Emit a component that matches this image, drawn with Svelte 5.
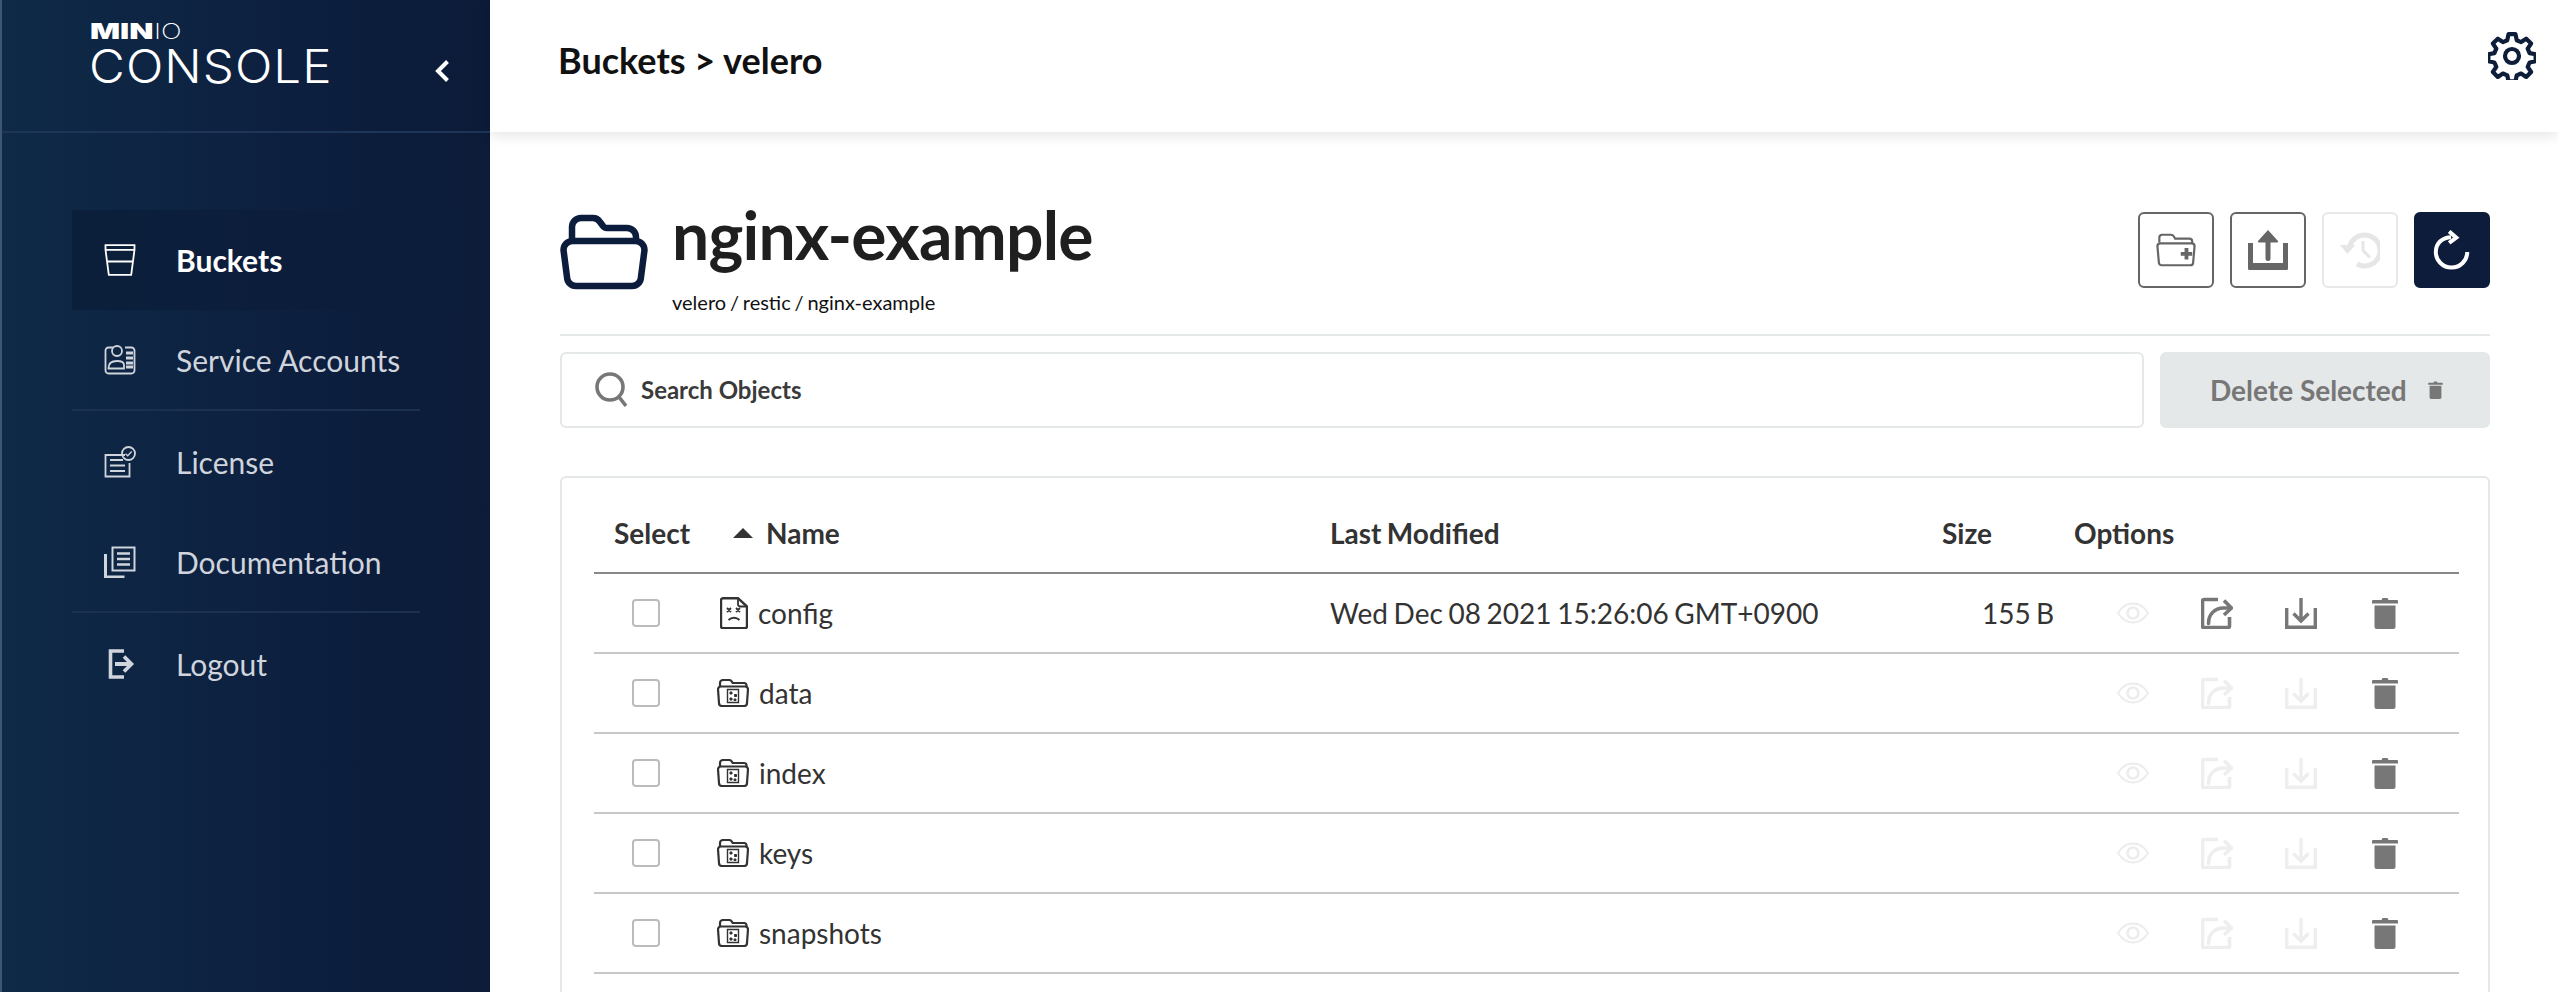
<script lang="ts">
  const navItems = [
    { label: "Buckets", icon: "bucket", active: true },
    { label: "Service Accounts", icon: "account", divider: true },
    { label: "License", icon: "license" },
    { label: "Documentation", icon: "docs", divider: true },
    { label: "Logout", icon: "logout" },
  ];

  const rows = [
    { name: "config", kind: "file", modified: "Wed Dec 08 2021 15:26:06 GMT+0900", size: "155 B" },
    { name: "data", kind: "folder", modified: "", size: "" },
    { name: "index", kind: "folder", modified: "", size: "" },
    { name: "keys", kind: "folder", modified: "", size: "" },
    { name: "snapshots", kind: "folder", modified: "", size: "" },
  ];
</script>

{#snippet trash(cls)}
  <svg class={cls} viewBox="0 0 26 32" fill="#777">
    <path d="M1 3h8.500L10.500 1h5l1 2H25a1 1 0 0 1 1 1v2.500H0V4a1 1 0 0 1 1-1z" />
    <path d="M2.500 8.500h21v21a2.500 2.500 0 0 1-2.500 2.500H5a2.500 2.500 0 0 1-2.500-2.500z" />
  </svg>
{/snippet}

<div class="layout">
  <aside class="sidebar">
    <div class="brand">
      <div class="logo">
        <div class="minio"><b>MIN</b><span>IO</span></div>
        <div class="console">CONSOLE</div>
      </div>
      <svg class="collapse" viewBox="0 0 16 24" fill="none" stroke="#fff" stroke-width="4">
        <path d="M13.500 2.500 4 12l9.500 9.500" />
      </svg>
    </div>
    <nav>
      {#each navItems as item}
        <div class="nav-item" class:active={item.active} class:divider={item.divider}>
          <svg class="nav-icon" viewBox="0 0 32 32" fill="none" stroke="currentColor" stroke-width="1.800">
            {#if item.icon === "bucket"}
              <path d="M1.500 1.200h29v4.600l-3.300 25h-22.400l-3.300-25zM1.500 5.800h29M3.200 17.500h25.600" />
            {:else if item.icon === "account"}
              <path d="M9 3.500H4.500a3 3 0 0 0-3 3v20a3 3 0 0 0 3 3h23a3 3 0 0 0 3-3v-20a3 3 0 0 0-3-3H21" />
              <circle cx="13" cy="7" r="5" />
              <path d="M4.500 24c0-5 3.500-7 8.500-7s7 2 7 4v3.500H4.500z" />
              <path d="M22 9h7M22 14h7M22 19h7M22 23h7" stroke-width="3" />
            {:else if item.icon === "license"}
              <path d="M21 9H1.500v21.500h24V17" />
              <path d="M6 14h13M6 19.500h15M6 25h15" stroke-width="2.200" />
              <circle cx="24.500" cy="7.500" r="6.500" />
              <path d="m21.500 7.800 2.200 2 4-4.300" stroke-width="1.300" />
            {:else if item.icon === "docs"}
              <path d="M8.500 1.500h22v23h-22z" stroke-width="2" />
              <path d="M13 7.500h13M13 13h13M13 18.500h13" stroke-width="2.400" />
              <path d="M1.500 8v23h19" stroke-width="3" />
            {:else}
              <path d="M20 3H6.500v26H20" stroke-width="3.600" />
              <path d="M11 16h14" stroke-width="4" />
              <path d="m20 8.500 7.500 7.500-7.500 7.500" stroke-width="3.600" />
            {/if}
          </svg>
          <span>{item.label}</span>
        </div>
      {/each}
    </nav>
  </aside>

  <div class="main">
    <header class="topbar">
      <h1>Buckets &gt; velero</h1>
      <svg class="gear" viewBox="0 0 48 48" fill="none" stroke="#0d1d3a" stroke-width="4.200" stroke-linejoin="round">
        <path d="M20.500 2.200h7l1.200 6 4.400 1.900 5.100-3.400 4.900 4.900-3.400 5.100 1.900 4.400 6 1.200v7l-6 1.200-1.900 4.400 3.400 5.100-4.900 4.900-5.100-3.400-4.400 1.900-1.200 6h-7l-1.200-6-4.400-1.900-5.100 3.400-4.900-4.900 3.400-5.100-1.900-4.400-6-1.200v-7l6-1.200 1.900-4.400-3.400-5.100 4.900-4.900 5.100 3.400 4.400-1.900z" />
        <circle cx="24" cy="24" r="7" />
      </svg>
    </header>

    <section class="page">
      <div class="title-row">
        <svg class="big-folder" viewBox="0 0 88 76" fill="none" stroke="#0c1c3c" stroke-width="6.500" stroke-linejoin="round">
          <path d="M12 27V13a9 9 0 0 1 9-9h12c3 0 5 1 7 4l3 4c1 1.500 2 2 4 2h20a9 9 0 0 1 9 9v4" />
          <path d="M3.500 36a9 9 0 0 1 9-9h63a9 9 0 0 1 9 9L81 63a9 9 0 0 1-9 9H16a9 9 0 0 1-9-9z" />
        </svg>
        <div class="title-text">
          <h2>nginx-example</h2>
          <div class="path">velero / restic / nginx-example</div>
        </div>
        <div class="actions">
          <button class="square">
            <svg viewBox="0 0 42 36" fill="none" stroke="#666" stroke-width="2.300">
              <path d="M3.500 10V5a3 3 0 0 1 3-3h9c2 0 3 1 4 3l.5 1h15a3 3 0 0 1 3 3v2" />
              <path d="M1.500 14a3 3 0 0 1 3-3h33a3 3 0 0 1 3 3l-1.500 17a3 3 0 0 1-3 3H6a3 3 0 0 1-3-3z" />
              <path d="M26 22h12M32 16v12" stroke-width="4" />
            </svg>
          </button>
          <button class="square">
            <svg viewBox="0 0 40 40" fill="#666" stroke="none">
              <path d="M0 13h5v20h30V13h5v25.500a1.500 1.500 0 0 1-1.500 1.500h-37A1.500 1.500 0 0 1 0 38.500z" />
              <path d="M20 0 30 11c.6.800-.2 1.500-1 1.500h-6.500v16a2.500 2.500 0 0 1-5 0v-16H11c-.8 0-1.600-.7-1-1.500z" />
            </svg>
          </button>
          <button class="square disabled">
            <svg viewBox="0 0 40 36" fill="none" stroke="#e6e6e6" stroke-width="5">
              <path d="M9.500 15A15.500 15.500 0 1 1 17 32" />
              <path d="M0 13h15l-7.500 9z" fill="#e6e6e6" stroke="none" />
              <path d="M23 9v9.500l7 7" stroke-width="3" />
            </svg>
          </button>
          <button class="square solid">
            <svg viewBox="0 0 38 42" fill="none" stroke="#fff" stroke-width="4.200">
              <path d="M35 23a16.500 16.500 0 1 1-33 0C2 14 9 7.500 18 7.500" />
              <path d="M16 1.500 23.500 8 16 13.500" />
            </svg>
          </button>
        </div>
      </div>

      <div class="search-row">
        <div class="search">
          <svg viewBox="0 0 32 36" fill="none" stroke="#777" stroke-width="3.600">
            <circle cx="15" cy="15" r="13" />
            <path d="m24 25 7 9" />
          </svg>
          <span>Search Objects</span>
        </div>
        <button class="delete">
          <span>Delete Selected</span>
          {@render trash("delete-icon")}
        </button>
      </div>

      <div class="card">
        <div class="row head">
          <div class="c-select">Select</div>
          <div class="c-name">
            <svg class="sort" viewBox="0 0 20 10" fill="#333"><path d="M10 0 20 10H0z" /></svg>
            Name
          </div>
          <div class="c-date">Last Modified</div>
          <div class="c-size">Size</div>
          <div class="c-opts">Options</div>
        </div>
        {#each rows as row}
          <div class="row">
            <div class="c-select"><span class="check"></span></div>
            <div class="c-name">
              {#if row.kind === "file"}
                <svg class="kind file" viewBox="0 0 28 32" fill="none" stroke="#333" stroke-width="2.400">
                  <path d="M18 1.200H3a2 2 0 0 0-2 2v26a2 2 0 0 0 2 2h22a2 2 0 0 0 2-2V9.500z" />
                  <path d="M18 1.200V7a2.500 2.500 0 0 0 2.500 2.500H27" stroke-width="1.800" />
                  <path d="m7 11 4 4m0-4-4 4M16 11l4 4m0-4-4 4" stroke-width="1.800" />
                  <path d="M8.500 23c3-3 8-3 11 0" stroke-width="1.800" />
                </svg>
              {:else}
                <svg class="kind folder" viewBox="0 0 32 28" fill="none" stroke="#333" stroke-width="2.200">
                  <path d="M3 8V4a3 3 0 0 1 3-3h6c1.500 0 2.500 1 3 2l.7 1H27a2.500 2.500 0 0 1 2.500 2.500V8" />
                  <path d="M1 10a3 3 0 0 1 3-2.500h24a3 3 0 0 1 3 2.500l-1 14a3 3 0 0 1-3 3H5a3 3 0 0 1-3-3z" />
                  <path d="M10.500 10.500h11v13h-11z" stroke-width="1.400" />
                  <path d="M13 13h2v2h-2zM17.500 15.500h2v2h-2zM13 19h2v2h-2zM17 20h2v1.500h-2z" fill="#333" stroke-width="1" />
                </svg>
              {/if}
              <span>{row.name}</span>
            </div>
            <div class="c-date">{row.modified}</div>
            <div class="c-size">{row.size}</div>
            <div class="c-opts icons" class:off={row.kind === "folder"}>
              <svg class="opt eye" viewBox="0 0 32 32" fill="none" stroke="#ececec" stroke-width="2">
                <path d="M1 16c4-6.500 9-9.500 15-9.500S27 9.500 31 16c-4 6.500-9 9.500-15 9.500S5 22.500 1 16z" />
                <circle cx="16" cy="16" r="5.500" stroke-width="2.500" />
              </svg>
              <svg class="opt dim" viewBox="0 0 32 32" fill="none" stroke="currentColor" stroke-width="3.600">
                <path d="M17 2.500H3a1.500 1.500 0 0 0-1.500 1.500v25A1.500 1.500 0 0 0 3 30.500h24a1.500 1.500 0 0 0 1.500-1.500V20" />
                <path d="M7.500 26.500c0-9 6-15.500 15-15.500h6" stroke-linecap="round" />
                <path d="m23 3.500 7.500 7.500-7.500 7" />
              </svg>
              <svg class="opt dim" viewBox="0 0 32 32" fill="none" stroke="currentColor" stroke-width="3.400">
                <path d="M1.700 11v19.300h28.600V11" />
                <path d="M16 1v23M8.500 16.500 16 24l7.500-7.500" />
              </svg>
              {@render trash("opt-trash")}
            </div>
          </div>
        {/each}
      </div>
    </section>
  </div>
</div>

<style>
  :global(body) {
    margin: 0;
    background: #fff;
    font-family: Lato, "Liberation Sans", sans-serif;
    color: #333;
    overflow: hidden;
  }

  .layout {
    display: flex;
    height: 992px;
    overflow: hidden;
  }

  .sidebar {
    width: 490px;
    flex: none;
    box-sizing: border-box;
    border-left: 2px solid #3d5674;
    background: linear-gradient(90deg, #0e2a47, #0d1f3f 60%, #0b1b38);
    color: #d0d4dc;
  }

  .brand {
    height: 133px;
    box-sizing: border-box;
    border-bottom: 2px solid #1e3558;
    display: flex;
    justify-content: space-between;
    padding: 23px 40px 0 88px;
  }

  .logo {
    color: #fff;
    line-height: 1;
  }

  .minio {
    display: flex;
    align-items: center;
    height: 17px;
    font-family: Inter, sans-serif;
    font-size: 21px;
    white-space: nowrap;
  }

  /* the wordmark is much wider than Inter, so stretch the letters */
  .minio b {
    display: inline-block;
    font-weight: 900;
    transform: scaleX(1.5);
    transform-origin: left;
    margin-right: 22px;
  }

  .minio span {
    display: inline-block;
    font-weight: 200;
    transform: scaleX(1.3);
    transform-origin: left;
  }

  .console {
    font-family: Inter, sans-serif;
    font-weight: 300;
    font-size: 46px;
    letter-spacing: 1px;
    transform: scaleX(1.07);
    transform-origin: left;
    margin-left: -1px;
    margin-top: 3px;
  }

  .collapse {
    width: 16px;
    height: 24px;
    margin-top: 36px;
  }

  nav {
    margin-top: 77px;
    padding: 0 70px;
  }

  .nav-item {
    height: 101px;
    box-sizing: border-box;
    display: flex;
    align-items: center;
    gap: 40px;
    padding-left: 32px;
    font-size: 30px;
  }

  .nav-item.active {
    height: 100px;
    margin-right: -70px;
    color: #fff;
    font-weight: 700;
    background: linear-gradient(90deg, #0b1f3b, #0c1d3b 70%, #0d1f3f00);
  }

  .nav-item.divider {
    border-bottom: 2px solid #1c3050;
  }

  .nav-icon {
    width: 32px;
    height: 32px;
    flex: none;
  }

  .main {
    flex: 1;
    min-width: 0;
  }

  .topbar {
    height: 132px;
    box-sizing: border-box;
    display: flex;
    align-items: center;
    justify-content: space-between;
    padding: 0 22px 12px 68px;
    box-shadow: 0 4px 12px rgba(0, 0, 0, 0.1);
    position: relative;
  }

  h1 {
    margin: 0;
    font-size: 36px;
    font-weight: 700;
    color: #111;
  }

  .gear {
    width: 48px;
    height: 48px;
    margin-bottom: 8px;
  }

  .page {
    padding: 0 68px 0 70px;
  }

  .title-row {
    height: 204px;
    box-sizing: border-box;
    border-bottom: 2px solid #e5e8e8;
    display: flex;
  }

  .big-folder {
    width: 88px;
    height: 76px;
    margin-top: 82px;
    flex: none;
  }

  .title-text {
    margin-left: 24px;
    margin-top: 60px;
  }

  h2 {
    margin: 0;
    font-size: 66px;
    line-height: 86px;
    font-weight: 700;
    letter-spacing: -0.800px;
    color: #1f1f1f;
  }

  .path {
    font-size: 20px;
    line-height: 24px;
    color: #111;
    margin-top: 12px;
    word-spacing: -1.300px;
  }

  .actions {
    margin-left: auto;
    margin-top: 80px;
    display: flex;
    gap: 16px;
  }

  .square {
    width: 76px;
    height: 76px;
    box-sizing: border-box;
    padding: 0;
    border: 2px solid #666;
    border-radius: 6px;
    background: #fff;
    display: flex;
    align-items: center;
    justify-content: center;
  }

  .square svg {
    width: 40px;
    height: 40px;
  }

  .square.disabled {
    border-color: #e8e8e8;
  }

  .square.solid {
    background: #0d1c3a;
    border-color: #0d1c3a;
  }

  .search-row {
    display: flex;
    gap: 16px;
    margin-top: 16px;
  }

  .search {
    flex: 1;
    height: 76px;
    box-sizing: border-box;
    border: 2px solid #e5e8e8;
    border-radius: 6px;
    display: flex;
    align-items: center;
    gap: 14px;
    padding-left: 33px;
    font-size: 24px;
    font-weight: 700;
    color: #3a3a3a;
  }

  .search span {
    margin-bottom: 2px;
  }

  .search svg {
    width: 32px;
    height: 36px;
  }

  .delete {
    width: 330px;
    height: 76px;
    border: none;
    border-radius: 6px;
    background: #e5e8e9;
    display: flex;
    align-items: center;
    gap: 21px;
    padding: 0 0 0 50px;
    font-family: inherit;
    font-size: 28px;
    font-weight: 700;
    color: #777;
  }

  .delete span {
    margin-bottom: 1px;
  }

  .delete-icon {
    width: 15px;
    height: 18px;
  }

  .card {
    margin-top: 48px;
    border: 2px solid #e5e8e8;
    border-radius: 6px;
    padding: 0 29px 0 32px;
    height: 600px;
  }

  .row {
    display: grid;
    grid-template-columns: 105px 631px 612px 120px 1fr;
    align-items: center;
    height: 80px;
    box-sizing: border-box;
    border-bottom: 2px solid #c8c8c8;
    font-size: 28px;
    color: #333;
  }

  .row.head {
    height: 96px;
    padding-top: 16px;
    border-bottom-color: #888;
    font-weight: 700;
  }

  .c-select {
    padding-left: 20px;
  }

  .check {
    display: block;
    width: 28px;
    height: 28px;
    margin-left: 18px;
    box-sizing: border-box;
    border: 2px solid #bbb;
    border-radius: 4px;
  }

  .c-name {
    display: flex;
    align-items: center;
    padding-left: 20px;
    gap: 10px;
  }

  .head .c-name {
    padding-left: 34px;
    gap: 13px;
  }

  .sort {
    width: 20px;
    height: 10px;
  }

  .kind.file {
    width: 28px;
    height: 32px;
    margin-left: 1px;
  }

  .kind.folder {
    width: 32px;
    height: 28px;
    margin-left: -2px;
  }

  .c-date {
    word-spacing: -1.500px;
  }

  .c-size {
    text-align: right;
    word-spacing: -2px;
  }

  .head .c-size {
    text-align: left;
  }

  .row:not(.head) .c-size {
    padding-right: 8px;
  }

  .head .c-opts {
    padding-left: 12px;
  }

  .icons {
    display: flex;
    align-items: center;
    gap: 52px;
    padding-left: 55px;
    color: #777;
  }

  .icons.off .dim {
    color: #eee;
  }

  .opt {
    width: 32px;
    height: 32px;
    flex: none;
  }

  .opt-trash {
    width: 26px;
    height: 32px;
    flex: none;
    margin-left: 3px;
  }
</style>
